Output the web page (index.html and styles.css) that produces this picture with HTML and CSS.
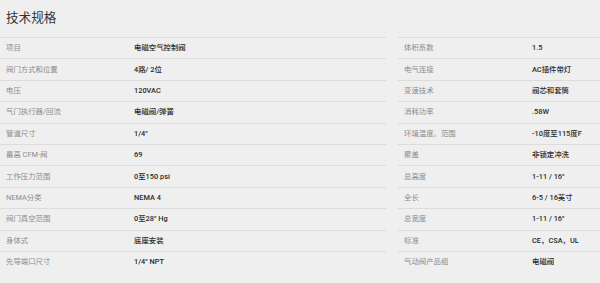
FILE: index.html
```html
<!DOCTYPE html>
<html lang="zh">
<head>
<meta charset="utf-8">
<link rel="stylesheet" href="styles.css">
</head>
<body>
<div class="page">
  <h2 class="title">技术规格</h2>
  <div class="tables">
    <div class="spec">
      <div class="row"><span class="k">项目</span><span class="v">电磁空气控制阀</span></div>
      <div class="row"><span class="k">阀门方式和位置</span><span class="v">4路/ 2位</span></div>
      <div class="row"><span class="k">电压</span><span class="v">120VAC</span></div>
      <div class="row"><span class="k">气门执行器/回流</span><span class="v">电磁阀/弹簧</span></div>
      <div class="row"><span class="k">管道尺寸</span><span class="v">1/4"</span></div>
      <div class="row"><span class="k">最高 CFM-阀</span><span class="v">69</span></div>
      <div class="row"><span class="k">工作压力范围</span><span class="v">0至150 psi</span></div>
      <div class="row"><span class="k">NEMA分类</span><span class="v">NEMA 4</span></div>
      <div class="row"><span class="k">阀门真空范围</span><span class="v">0至28" Hg</span></div>
      <div class="row"><span class="k">身体式</span><span class="v">底座安装</span></div>
      <div class="row"><span class="k">先导端口尺寸</span><span class="v">1/4" NPT</span></div>
    </div>
    <div class="spec">
      <div class="row"><span class="k">体积系数</span><span class="v">1.5</span></div>
      <div class="row"><span class="k">电气连接</span><span class="v">AC插件带灯</span></div>
      <div class="row"><span class="k">变速技术</span><span class="v">阀芯和套筒</span></div>
      <div class="row"><span class="k">消耗功率</span><span class="v">.58W</span></div>
      <div class="row"><span class="k">环境温度。范围</span><span class="v">-10度至115度F</span></div>
      <div class="row"><span class="k">覆盖</span><span class="v">非锁定冲洗</span></div>
      <div class="row"><span class="k">总高度</span><span class="v">1-11 / 16"</span></div>
      <div class="row"><span class="k">全长</span><span class="v">6-5 / 16英寸</span></div>
      <div class="row"><span class="k">总宽度</span><span class="v">1-11 / 16"</span></div>
      <div class="row"><span class="k">标准</span><span class="v">CE，CSA，UL</span></div>
      <div class="row"><span class="k">气动阀产品组</span><span class="v">电磁阀</span></div>
    </div>
  </div>
</div>
</body>
</html>
```
FILE: styles.css
```css
html, body {
  margin: 0;
  padding: 0;
  background: #efefef;
}
.page {
  width: 600px;
  overflow: hidden;
  font-family: Roboto, "Noto Sans CJK SC", sans-serif;
}
.title {
  margin: 0;
  height: 37px;
  box-sizing: border-box;
  padding: 9px 0 0 6px;
  font-size: 12.6px;
  line-height: 17px;
  font-weight: 400;
  color: #333;
}
.tables {
  display: flex;
  gap: 12px;
}
.spec {
  flex: 0 0 386px;
}
.row {
  display: grid;
  grid-template-columns: 134px 1fr;
  align-items: center;
  height: 21.4px;
  box-sizing: border-box;
  border-top: 1px solid #dcdcdc;
  font-size: 7.4px;
  line-height: 10px;
}
.k {
  padding-left: 6px;
  color: #8c8c8c;
}
.v {
  color: #2a2a2a;
  font-weight: 500;
}
```
